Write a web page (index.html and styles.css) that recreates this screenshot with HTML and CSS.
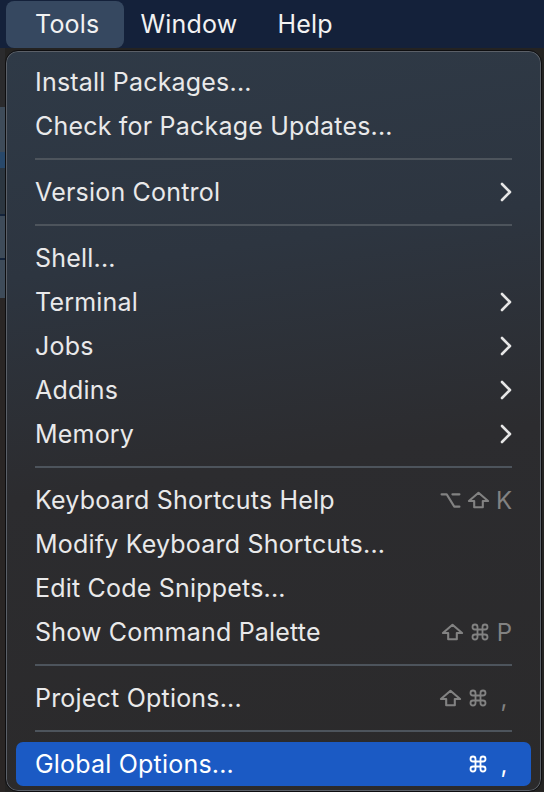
FILE: index.html
```html
<!DOCTYPE html>
<html>
<head>
<meta charset="utf-8">
<link rel="stylesheet" href="styles.css">
</head>
<body>
<div class="menubar">
  <div class="mb-item active">Tools</div>
  <div class="mb-item">Window</div>
  <div class="mb-item">Help</div>
</div>
<div class="backdrop">
  <div class="strip">
    <div class="band b-dark"></div>
    <div class="band b-grey h45"></div>
    <div class="band b-blue h16"></div>
    <div class="band b-slate h46"></div>
    <div class="band b-line"></div>
    <div class="band b-grey h42"></div>
    <div class="band b-line"></div>
    <div class="band b-grey h38"></div>
    <div class="band b-rest"></div>
  </div>
  <div class="menu">
    <div class="item"><span class="label">Install Packages...</span></div>
    <div class="item"><span class="label">Check for Package Updates...</span></div>
    <div class="sep"></div>
    <div class="item"><span class="label">Version Control</span><svg class="chev" viewBox="0 0 12 20"><path d="M2 2 L10 10 L2 18"/></svg></div>
    <div class="sep"></div>
    <div class="item"><span class="label">Shell...</span></div>
    <div class="item"><span class="label">Terminal</span><svg class="chev" viewBox="0 0 12 20"><path d="M2 2 L10 10 L2 18"/></svg></div>
    <div class="item"><span class="label">Jobs</span><svg class="chev" viewBox="0 0 12 20"><path d="M2 2 L10 10 L2 18"/></svg></div>
    <div class="item"><span class="label">Addins</span><svg class="chev" viewBox="0 0 12 20"><path d="M2 2 L10 10 L2 18"/></svg></div>
    <div class="item"><span class="label">Memory</span><svg class="chev" viewBox="0 0 12 20"><path d="M2 2 L10 10 L2 18"/></svg></div>
    <div class="sep"></div>
    <div class="item"><span class="label">Keyboard Shortcuts Help</span>
      <span class="keys">
        <svg class="k-opt" viewBox="0 0 22 18"><path d="M1.5 2.5 H7 L15 15.5 H20.5 M13 2.5 H20.5"/></svg>
        <svg class="k-shift" viewBox="0 0 24 18"><path d="M12 1.5 L22 10 H16.5 V16.5 H7.5 V10 H2 Z"/></svg>
        <span class="k-letter">K</span>
      </span>
    </div>
    <div class="item"><span class="label">Modify Keyboard Shortcuts...</span></div>
    <div class="item"><span class="label">Edit Code Snippets...</span></div>
    <div class="item"><span class="label">Show Command Palette</span>
      <span class="keys">
        <svg class="k-shift" viewBox="0 0 24 18"><path d="M12 1.5 L22 10 H16.5 V16.5 H7.5 V10 H2 Z"/></svg>
        <svg class="k-cmd" viewBox="0 0 24 24"><path d="M15 6v12a3 3 0 1 0 3-3H6a3 3 0 1 0 3 3V6a3 3 0 1 0-3 3h12a3 3 0 1 0-3-3"/></svg>
        <span class="k-letter">P</span>
      </span>
    </div>
    <div class="sep"></div>
    <div class="item"><span class="label">Project Options...</span>
      <span class="keys">
        <svg class="k-shift" viewBox="0 0 24 18"><path d="M12 1.5 L22 10 H16.5 V16.5 H7.5 V10 H2 Z"/></svg>
        <svg class="k-cmd" viewBox="0 0 24 24"><path d="M15 6v12a3 3 0 1 0 3-3H6a3 3 0 1 0 3 3V6a3 3 0 1 0-3 3h12a3 3 0 1 0-3-3"/></svg>
        <span class="k-comma">,</span>
      </span>
    </div>
    <div class="sep"></div>
    <div class="item selected"><span class="label">Global Options...</span>
      <span class="keys">
        <svg class="k-cmd" viewBox="0 0 24 24"><path d="M15 6v12a3 3 0 1 0 3-3H6a3 3 0 1 0 3 3V6a3 3 0 1 0-3 3h12a3 3 0 1 0-3-3"/></svg>
        <span class="k-comma">,</span>
      </span>
    </div>
  </div>
</div>
</body>
</html>
```
FILE: styles.css
```css
html, body {
  margin: 0;
  padding: 0;
  width: 544px;
  height: 792px;
  overflow: hidden;
  background: #242322;
  font-family: Inter, "Noto Sans", sans-serif;
  color: #e8e8e8;
}
.menubar {
  height: 48px;
  background: #14213a;
  display: flex;
  align-items: center;
  padding-left: 6px;
  box-sizing: border-box;
}
.mb-item {
  height: 47px;
  display: flex;
  align-items: center;
  padding: 0 24px 0 16px;
  font-size: 25px;
  letter-spacing: 0.2px;
  color: #f2f2f2;
  border-radius: 8px;
}
.mb-item.active {
  background: #364860;
  padding: 0 25px 0 29px;
}
.backdrop {
  position: relative;
  height: 744px;
}
.strip {
  width: 5px;
  height: 100%;
  display: flex;
  flex-direction: column;
}
.band { width: 100%; }
.b-dark { height: 59px; background: #2b2b2d; }
.b-grey { background: #3e4b59; }
.b-blue { background: #28486a; }
.b-slate { background: #2c3640; }
.b-line { height: 2px; background: #14233a; }
.b-rest { flex: 1; background: #2a2625; }
.h45 { height: 45px; }
.h16 { height: 16px; }
.h46 { height: 46px; }
.h42 { height: 42px; }
.h38 { height: 38px; }
.menu {
  position: absolute;
  left: 5px;
  top: 2px;
  width: 537px;
  height: 742px;
  box-sizing: border-box;
  border: 1px solid #0e0e10;
  border-radius: 13px;
  box-shadow: inset 0 0 0 1px #5b6068;
  background: linear-gradient(172deg, #2f3a47 0%, #2d3540 28%, #2c2c2f 55%, #2b2a2b 100%);
  padding: 9px 10px 0 10px;
  display: flex;
  flex-direction: column;
}
.item {
  height: 44px;
  flex: none;
  display: flex;
  align-items: center;
  justify-content: space-between;
  padding: 0 19px 0 19px;
  border-radius: 7px;
  font-size: 25px;
  letter-spacing: 0.2px;
  color: #e9e9ea;
}
.label { white-space: nowrap; }
.chev {
  width: 12px;
  height: 20px;
  margin-right: 0;
}
.chev path {
  fill: none;
  stroke: #e6e6e6;
  stroke-width: 2.6;
  stroke-linecap: round;
  stroke-linejoin: round;
}
.keys {
  display: flex;
  align-items: center;
  gap: 6px;
  color: #828282;
}
.keys svg path {
  fill: none;
  stroke: #828282;
  stroke-width: 2.2;
  stroke-linejoin: round;
  stroke-linecap: round;
}
.k-opt { width: 21px; height: 17px; }
.k-shift { width: 23px; height: 18px; }
.k-cmd { width: 20px; height: 20px; }
.k-cmd path { stroke-width: 2.3; }
.k-letter {
  font-size: 24px;
  letter-spacing: 0;
  width: 16px;
  text-align: right;
}
.k-comma {
  font-size: 24px;
  width: 16px;
  text-align: center;
  margin-left: 2px;
}
.sep {
  height: 2px;
  margin: 10px 19px 10px 19px;
  background: #4d545c;
  flex: none;
}
.selected {
  background: #1b5ac4;
  color: #ffffff;
}
.selected .keys { color: #ffffff; }
.selected .keys svg path { stroke: #ffffff; }
```
